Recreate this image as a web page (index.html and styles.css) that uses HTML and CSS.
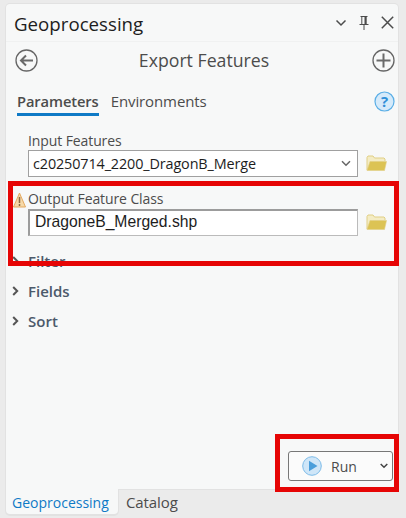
FILE: index.html
```html
<!DOCTYPE html>
<html lang="en">
<head>
<meta charset="utf-8">
<title>Geoprocessing</title>
<link rel="stylesheet" href="styles.css">
</head>
<body>
<div class="pane">
  <main class="panel">
    <header class="titlebar">
      <h1 class="title">Geoprocessing</h1>
      <div class="win-icons">
        <svg width="12" height="8" viewBox="0 0 12 8"><path d="M1.500 1.500 6 6l4.500-4.500" class="stroke"/></svg>
        <svg width="10" height="14" viewBox="0 0 10 14"><path d="M1.500 .5h7M2.800 .5v7.500M7.200 .5v7.500M.5 8.500h9M5 8.500V14" class="stroke thin"/><path d="M5.500 1h1.500v7H5.500z" fill="#4c4c4c"/></svg>
        <svg width="13" height="13" viewBox="0 0 13 13"><path d="M.8.8l11.400 11.400M12.200.8.8 12.200" class="stroke"/></svg>
      </div>
    </header>
    <nav class="toolbar">
      <svg width="23" height="23" viewBox="0 0 23 23"><circle cx="11.500" cy="11.500" r="10.500" class="ring"/><path d="M18 11.500H6M11 6.500l-5 5 5 5" class="arrow"/></svg>
      <span class="tool-name">Export Features</span>
      <svg width="23" height="23" viewBox="0 0 23 23"><circle cx="11.500" cy="11.500" r="10.500" class="ring"/><path d="M11.500 4.500v14M4.500 11.500h14" class="arrow"/></svg>
    </nav>
    <div class="tabs">
      <span class="tab active">Parameters</span>
      <span class="tab">Environments</span>
      <svg class="help" width="21" height="21" viewBox="0 0 21 21"><circle cx="10.500" cy="10.500" r="9.500" fill="#d5eafa" stroke="#5aaee6" stroke-width="1.200"/><text x="10.500" y="15.500" text-anchor="middle" class="help-mark">?</text></svg>
    </div>
    <section class="field">
      <label class="field-label">Input Features</label>
      <div class="field-row">
        <div class="input combo"><span>c20250714_2200_DragonB_Merge</span>
          <svg width="10" height="7" viewBox="0 0 10 7"><path d="M1 1.200 5 5.200l4-4" fill="none" stroke="#666" stroke-width="1.500"/></svg>
        </div>
        <svg width="21" height="17" viewBox="0 0 21 17"><path d="M1 15V2.500L2 1h5l1.500 2H18l1 1v2" fill="#f4ecc4" stroke="#e0cf85"/><path d="M1 15.500 4 6.500h16.500L18.500 15.500z" fill="#dcc354" stroke="#e0cf85" stroke-width=".6"/></svg>
      </div>
    </section>
    <section class="field second">
      <label class="field-label">Output Feature Class</label>
      <svg class="warn" width="13" height="16" viewBox="0 0 13 16"><path d="M6.500 1 12.500 15H.500z" fill="#f6d9a8" stroke="#e3a860"/><path d="M6.500 5v6M6.500 12v2" stroke="#8a6a40" stroke-width="1.500"/></svg>
      <div class="field-row">
        <div class="input output">DragoneB_Merged.shp</div>
        <svg width="21" height="17" viewBox="0 0 21 17"><path d="M1 15V2.500L2 1h5l1.500 2H18l1 1v2" fill="#f4ecc4" stroke="#e0cf85"/><path d="M1 15.500 4 6.500h16.500L18.500 15.500z" fill="#dcc354" stroke="#e0cf85" stroke-width=".6"/></svg>
      </div>
    </section>
    <ul class="groups">
      <li class="group"><svg width="7" height="10" viewBox="0 0 7 10"><path d="M1.200 1 5.200 5l-4 4" class="chev"/></svg>Filter</li>
      <li class="group"><svg width="7" height="10" viewBox="0 0 7 10"><path d="M1.200 1 5.200 5l-4 4" class="chev"/></svg>Fields</li>
      <li class="group"><svg width="7" height="10" viewBox="0 0 7 10"><path d="M1.200 1 5.200 5l-4 4" class="chev"/></svg>Sort</li>
    </ul>
    <div class="actions">
      <button class="run">
        <svg width="20" height="20" viewBox="0 0 20 20"><circle cx="10" cy="10" r="9.300" fill="#cfe6f8" stroke="#7dbbe8"/><path d="M7 4.800v10.400L15.500 10z" fill="#4a9edb"/></svg>
        <span class="run-label">Run</span>
        <svg class="run-caret" width="8" height="6" viewBox="0 0 8 6"><path d="M.7 1 4 4.300 7.300 1" fill="none" stroke="#444" stroke-width="1.500"/></svg>
      </button>
    </div>
  </main>
  <footer class="dock-tabs">
    <span class="dock-tab current">Geoprocessing</span>
    <span class="dock-tab">Catalog</span>
  </footer>
</div>
<div class="mark mark-output"></div>
<div class="mark mark-run"></div>
</body>
</html>
```
FILE: styles.css
```css
* { box-sizing: border-box; }
html, body { margin: 0; height: 100%; }
body {
  width: 406px;
  height: 518px;
  background: #ebebeb;
  font-family: "Open Sans", "Noto Sans", sans-serif;
  color: #4c4c4c;
  overflow: hidden;
  position: relative;
}
.pane {
  display: flex;
  flex-direction: column;
  height: 518px;
  padding: 4px 8px 4px 6px;
}
.panel {
  height: 485px;
  background: #f7f8f8;
  border-radius: 4px 4px 0 0;
  box-shadow: 0 0 0 1px #e2e2e2;
  display: flex;
  flex-direction: column;
}
.titlebar {
  height: 38px;
  padding: 0 4px 0 8px;
  display: flex;
  align-items: center;
  justify-content: space-between;
  border-bottom: 1px solid #f0f1f1;
}
.title { margin: 2px 0 0; font-size: 18.700px; font-weight: 400; color: #1d1d1d; line-height: 26px; }
.win-icons { display: flex; align-items: center; gap: 12px; }
.stroke { fill: none; stroke: #4c4c4c; stroke-width: 1.500; }
.thin { stroke-width: 1; }
.toolbar {
  height: 36px;
  padding: 0 3px 0 9px;
  display: flex;
  align-items: center;
  justify-content: space-between;
}
.ring { fill: none; stroke: #666; stroke-width: 1.300; }
.arrow { fill: none; stroke: #6a6a6a; stroke-width: 2; }
.tool-name { font-size: 17.700px; color: #4c4c4c; margin-left: -2px; }
.tabs {
  height: 43px;
  padding: 12px 3px 0 11px;
  display: flex;
  align-items: flex-start;
  gap: 12px;
}
.tab { font-size: 15px; line-height: 22px; height: 26px; color: #4c4c4c; letter-spacing: -.1px; }
.tab.active { font-weight: 600; border-bottom: 3px solid #0f7ac6; font-size: 14.700px; }
.help { margin-left: auto; margin-top: 1px; }
.field { position: relative; padding: 0 0 0 22px; margin-top: 10px; }
.field.second { margin-top: 12px; }
.field-label { display: block; font-size: 14px; line-height: 20px; height: 19px; color: #4c4c4c; letter-spacing: -.1px; }
.second .field-label { height: 20px; }
.field-row { display: flex; align-items: center; gap: 8px; }
.input {
  width: 330px;
  height: 27px;
  background: #fff;
  border: 1px solid #a0a0a0;
  display: flex;
  align-items: center;
  font-size: 14.400px;
  color: #1d1d1d;
}
.combo { justify-content: space-between; padding: 0 6px 0 4px; letter-spacing: -.12px; }
.output {
  font-family: "Liberation Sans", Arial, sans-serif;
  font-size: 15.700px;
  padding: 0 0 2px 5px;
  border-width: 2px 1px 1px 2px;
  border-color: #9c9c9c #bbb #bbb #9c9c9c;
}
.warn { position: absolute; left: 7px; top: 3px; }
.groups { list-style: none; margin: 10px 0 0; padding: 0 0 0 6px; }
.group {
  height: 30px;
  display: flex;
  align-items: center;
  gap: 9px;
  font-size: 15px;
  font-weight: 600;
  color: #4c5a6b;
}
.chev { fill: none; stroke: #555; stroke-width: 2; }
.actions { margin-top: auto; padding: 0 5px 8px 0; display: flex; justify-content: flex-end; }
.run {
  width: 105px;
  height: 30px;
  background: #fbfbfb;
  border: 1px solid #777;
  border-radius: 3px;
  padding: 0 4px 0 13px;
  display: flex;
  align-items: center;
  font: inherit;
  color: #4c4c4c;
}
.run-label { font-size: 14px; margin-left: 9px; }
.run-caret { margin-left: auto; }
.dock-tabs { height: 25px; display: flex; align-items: stretch; }
.dock-tab { font-size: 15px; line-height: 27px; padding: 0 8px; color: #4c4c4c; letter-spacing: -.1px; }
.dock-tab.current {
  width: 112px;
  padding: 0 0 0 6px;
  font-size: 14px;
  letter-spacing: 0;
  color: #0f7ac6;
  background: #f7f8f8;
  border-radius: 0 0 4px 4px;
  box-shadow: 0 1px 0 1px #e2e2e2;
}
.mark { position: absolute; border: 5px solid #e60505; pointer-events: none; }
.mark-output { left: 8px; top: 181px; width: 391px; height: 85px; }
.mark-run { left: 275px; top: 434px; width: 124px; height: 58px; }
.help-mark { font-family: "Open Sans", sans-serif; font-size: 15px; font-weight: 700; fill: #2f8fd8; }
```
